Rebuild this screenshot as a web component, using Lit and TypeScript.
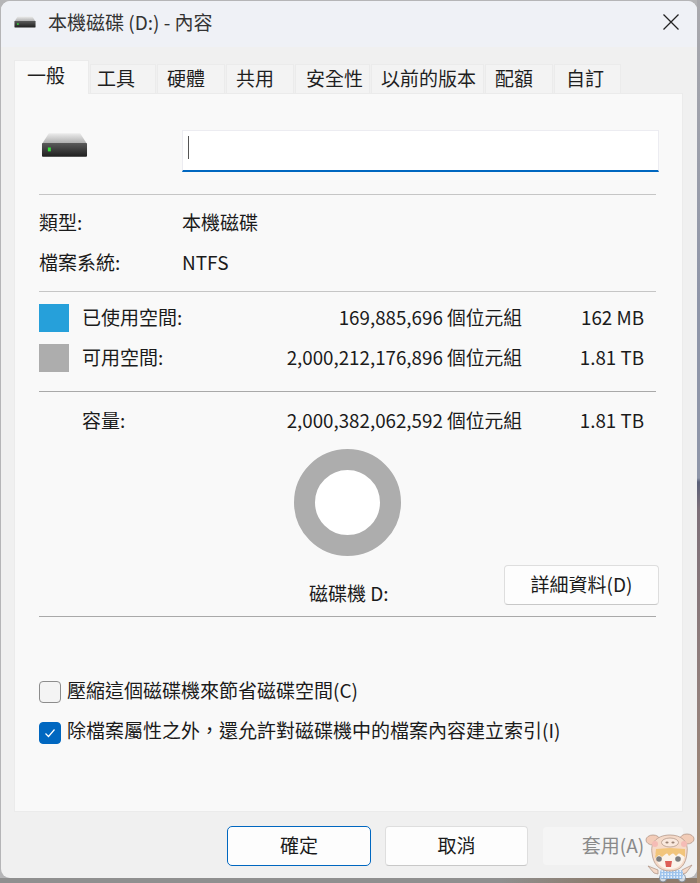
import { LitElement, html, css, svg } from 'lit'
import { customElement } from 'lit/decorators.js'

// label, tab width, label inset
const TABS: [string, number, number][] = [
  ['工具', 66, 6],
  ['硬體', 68, 9],
  ['共用', 68, 9],
  ['安全性', 75, 10],
  ['以前的版本', 113, 9],
  ['配額', 68, 9],
  ['自訂', 67, 11],
]

const driveIcon = (w: number, h: number, id: string) => html`
  <svg width=${w} height=${h} viewBox="0 0 48 26">
    <defs>
      <linearGradient id="top-${id}" x1="0" y1="0" x2="0" y2="1">
        <stop offset="0" stop-color="#ececec" />
        <stop offset="1" stop-color="#a9a9a9" />
      </linearGradient>
      <linearGradient id="front-${id}" x1="0" y1="0" x2="0" y2="1">
        <stop offset="0" stop-color="#5a5a5a" />
        <stop offset="1" stop-color="#1f1f1f" />
      </linearGradient>
    </defs>
    <path d="M8 1h32l7 11H1z" fill="url(#top-${id})" />
    <rect x="1" y="11" width="46" height="14" rx="1" fill="url(#front-${id})" />
    ${svg`<rect x="7" y="15.5" width="3" height="4" fill="#35e23a" />`}
  </svg>
`

@customElement('app-root')
export class AppRoot extends LitElement {
  static styles = css`
    :host {
      display: block;
      width: 700px;
      height: 883px;
      overflow: hidden;
      background:
        linear-gradient(#a9a9ad 0, #8e95a8 300px, #8e95a8 478px, #5a5f78 482px, #7d6f78 510px, #93807c 700px, #a58a70 883px) right / 3px 100% no-repeat,
        linear-gradient(to right, #8f8f8f 0, #8f8f8f 500px, #8c7a6a 610px) bottom / 100% 5px no-repeat,
        #b5b5b7;
      font-family: 'Noto Sans CJK TC', 'Open Sans', sans-serif;
      color: #1b1b1b;
      font-size: 19px;
    }
    .window {
      box-sizing: border-box;
      width: 696px;
      height: 877px;
      margin-left: 1px;
      margin-top: 1px;
      background: #f0f0f0;
      border-radius: 9px;
      overflow: hidden;
      display: flex;
      flex-direction: column;
      position: relative;
    }
    .title {
      box-sizing: border-box;
      height: 46px;
      flex: none;
      background: #eff1f6;
      display: flex;
      align-items: center;
      padding: 0 0 5px 13px;
      gap: 12px;
      color: #333;
    }
    .close {
      margin-left: auto;
      margin-right: 17px;
      display: flex;
    }
    .body {
      flex: 1;
      display: flex;
      flex-direction: column;
      padding: 13px 13px 0 13px;
      box-sizing: border-box;
    }
    .tabs {
      display: flex;
      align-items: flex-end;
      height: 33px;
      flex: none;
      gap: 1px;
    }
    .tab {
      height: 29px;
      display: flex;
      align-items: center;
      flex: none;
      background: #f3f3f3;
      border: 1px solid #ebebeb;
      border-bottom: none;
      box-sizing: border-box;
      color: #1f1f1f;
      padding-bottom: 3px;
    }
    .tab.active {
      height: 34px;
      width: 75px;
      background: #f9f9f9;
      margin-bottom: -1px;
      position: relative;
      z-index: 1;
      padding: 0 0 7px 12px;
    }
    .panel {
      box-sizing: border-box;
      width: 669px;
      height: 719px;
      flex: none;
      background: #f9f9f9;
      border: 1px solid #ebebeb;
      padding: 36px 26px 0 24px;
      display: flex;
      flex-direction: column;
    }
    .head {
      display: flex;
      align-items: flex-start;
      height: 64px;
      flex: none;
    }
    .head .icon {
      width: 143px;
      padding: 2px 0 0 2px;
      box-sizing: border-box;
      flex: none;
    }
    .input {
      width: 477px;
      height: 42px;
      flex: none;
      background: #fff;
      border: 1px solid #ececf1;
      border-bottom: 2px solid #0067c0;
      box-sizing: border-box;
      padding: 5px 0 0 5px;
    }
    .caret {
      width: 1px;
      height: 23px;
      background: #555;
    }
    .rule {
      height: 1px;
      background: #c6c6c6;
      flex: none;
      width: 617px;
    }
    .rule.dark {
      background: #a9a9a9;
    }
    .info {
      display: grid;
      grid-template-columns: 143px 1fr;
      grid-auto-rows: 40px;
      align-items: center;
      height: 96px;
      padding-top: 6px;
      box-sizing: border-box;
      flex: none;
    }
    .usage {
      display: grid;
      grid-template-columns: 43px 200px 240px 1fr;
      grid-auto-rows: 40px;
      align-items: center;
      height: 99px;
      padding-top: 4px;
      padding-right: 12px;
      box-sizing: border-box;
      flex: none;
    }
    .swatch {
      width: 30px;
      height: 28px;
      margin-top: 4px;
    }
    .swatch.used {
      background: #26a0da;
    }
    .swatch.free {
      background: #adadad;
    }
    .num,
    .size {
      text-align: right;
      font-size: 18.75px;
    }
    .usage.capacity {
      padding-top: 7px;
      height: 57px;
    }
    .donut-wrap {
      margin-left: 254px;
      width: 108px;
      flex: none;
      display: flex;
      justify-content: center;
    }
    .donut {
      box-sizing: border-box;
      width: 107px;
      height: 107px;
      border-radius: 50%;
      border: 21px solid #adadad;
      background: #fff;
    }
    .drive-row {
      display: flex;
      height: 60px;
      flex: none;
      align-items: flex-start;
    }
    .drive-label {
      margin-left: 270px;
      margin-top: 24px;
      line-height: 26px;
    }
    .btn {
      box-sizing: border-box;
      height: 40px;
      background: #fdfdfd;
      border: 1px solid #dedede;
      border-bottom-color: #c8c8c8;
      border-radius: 4px;
      display: flex;
      align-items: center;
      justify-content: center;
      color: #1b1b1b;
      padding-bottom: 3px;
    }
    .details {
      width: 155px;
      margin-left: auto;
      margin-right: -3px;
      margin-top: 9px;
    }
    .options {
      display: flex;
      flex-direction: column;
      gap: 15px;
      margin-top: 60px;
    }
    .check {
      display: flex;
      align-items: center;
      gap: 6px;
      height: 25px;
    }
    .box {
      box-sizing: border-box;
      width: 22px;
      height: 22px;
      border-radius: 4px;
      border: 1px solid #8d8d8d;
      background: #f4f4f4;
      flex: none;
      display: flex;
      align-items: center;
      justify-content: center;
      margin-top: 4px;
    }
    .box.on {
      background: #0067c0;
      border-color: #0067c0;
      margin-top: 7px;
    }
    .footer {
      display: flex;
      justify-content: flex-end;
      gap: 14px;
      padding-top: 14px;
    }
    .footer .ok {
      width: 144px;
      border: 1px solid #0067c0;
      border-radius: 5px;
    }
    .footer .cancel {
      width: 143px;
    }
    .footer .disabled {
      width: 142px;
      background: #f5f5f5;
      border-color: #f0f0f0;
      color: #8a8a8a;
    }
    .mascot {
      position: absolute;
      left: 645px;
      top: 833px;
      display: block;
    }
  `

  render() {
    return html`
      <div class="window">
        <div class="title">
          ${driveIcon(22, 12, 'small')}
          <span>本機磁碟 (D:) - 內容</span>
          <span class="close">
            <svg width="18" height="18" viewBox="0 0 18 18">
              <path d="M1.5 1.5l15 15M16.5 1.5l-15 15" stroke="#222" stroke-width="1.3" fill="none" />
            </svg>
          </span>
        </div>
        <div class="body">
          <div class="tabs">
            <div class="tab active">一般</div>
            ${TABS.map(
              ([label, width, inset]) =>
                html`<div class="tab" style="width:${width}px;padding-left:${inset}px">${label}</div>`
            )}
          </div>
          <div class="panel">
            <div class="head">
              <div class="icon">${driveIcon(47, 26, 'big')}</div>
              <div class="input"><div class="caret"></div></div>
            </div>
            <div class="rule"></div>
            <div class="info">
              <span>類型:</span><span>本機磁碟</span>
              <span>檔案系統:</span><span>NTFS</span>
            </div>
            <div class="rule"></div>
            <div class="usage">
              <div class="swatch used"></div>
              <span>已使用空間:</span>
              <span class="num">169,885,696 個位元組</span>
              <span class="size">162 MB</span>
              <div class="swatch free"></div>
              <span>可用空間:</span>
              <span class="num">2,000,212,176,896 個位元組</span>
              <span class="size">1.81 TB</span>
            </div>
            <div class="rule dark"></div>
            <div class="usage capacity">
              <span></span>
              <span>容量:</span>
              <span class="num">2,000,382,062,592 個位元組</span>
              <span class="size">1.81 TB</span>
            </div>
            <div class="donut-wrap"><div class="donut"></div></div>
            <div class="drive-row">
              <span class="drive-label">磁碟機 D:</span>
              <div class="btn details">詳細資料(D)</div>
            </div>
            <div class="rule dark"></div>
            <div class="options">
              <div class="check">
                <span class="box"></span>
                <span>壓縮這個磁碟機來節省磁碟空間(C)</span>
              </div>
              <div class="check">
                <span class="box on">
                  <svg width="14" height="14" viewBox="0 0 14 14">
                    <path d="M2.5 7.5l3 3 6-7" stroke="#fff" stroke-width="1.2" fill="none" />
                  </svg>
                </span>
                <span>除檔案屬性之外，還允許對磁碟機中的檔案內容建立索引(I)</span>
              </div>
            </div>
          </div>
          <div class="footer">
            <div class="btn ok">確定</div>
            <div class="btn cancel">取消</div>
            <div class="btn disabled">套用(A)</div>
          </div>
        </div>
      </div>
      <svg class="mascot" width="52" height="50" viewBox="0 0 52 50" opacity="0.85">
        <defs>
          <pattern id="plaid" width="3" height="3" patternUnits="userSpaceOnUse">
            <rect width="3" height="3" fill="#e8f2fc" />
            <rect width="1.5" height="3" fill="#8fbcec" />
            <rect width="3" height="1.2" fill="#8fbcec" />
          </pattern>
        </defs>
        <ellipse cx="8" cy="7" rx="7" ry="5" fill="#f3c6ae" stroke="#a98a78" stroke-width="0.8" />
        <ellipse cx="42" cy="6" rx="7" ry="5" fill="#f3c6ae" stroke="#a98a78" stroke-width="0.8" />
        <path d="M3 33l10 4 0 4-4-1zM47 32l-10 5 0 4 4-1z" fill="#f6d6c2" stroke="#a98a78" stroke-width="0.8" />
        <ellipse cx="18" cy="45" rx="3.6" ry="4" fill="#dfe9f3" stroke="#6f7f92" stroke-width="0.8" />
        <ellipse cx="37" cy="45" rx="3.6" ry="4" fill="#dfe9f3" stroke="#6f7f92" stroke-width="0.8" />
        <rect x="15" y="37" width="23" height="9" rx="2" fill="url(#plaid)" />
        <path d="M7 20C5 8 14 2 25 2s19 6 17 18c-1 11-6 18-17 18S8 31 7 20z" fill="#f6d6c2" stroke="#a98a78" stroke-width="0.8" />
        <ellipse cx="25" cy="9.5" rx="8.5" ry="4.5" fill="#fbe8da" stroke="#a98a78" stroke-width="0.8" />
        <ellipse cx="22" cy="9.5" rx="1.6" ry="1" fill="#8c6f5e" />
        <ellipse cx="28" cy="9.5" rx="1.6" ry="1" fill="#8c6f5e" />
        <circle cx="10" cy="11" r="3" fill="#f6b3ac" />
        <circle cx="39" cy="11" r="3" fill="#f6b3ac" />
        <path d="M10 21c1 9 6 15 15 15s14-6 15-15z" fill="#fdf3e9" />
        <path d="M10 25l1-9 14-1 15 1 0 8-6-4-3 3-3-3-4 3-2-3-5 4-3-2z" fill="#f2bd66" />
        <circle cx="14" cy="26" r="2.8" fill="#6a6a6a" />
        <circle cx="33" cy="26" r="2.8" fill="#6a6a6a" />
        <path d="M20 28h7l-1 6h-5z" fill="#d9453c" />
      </svg>
    `
  }
}
